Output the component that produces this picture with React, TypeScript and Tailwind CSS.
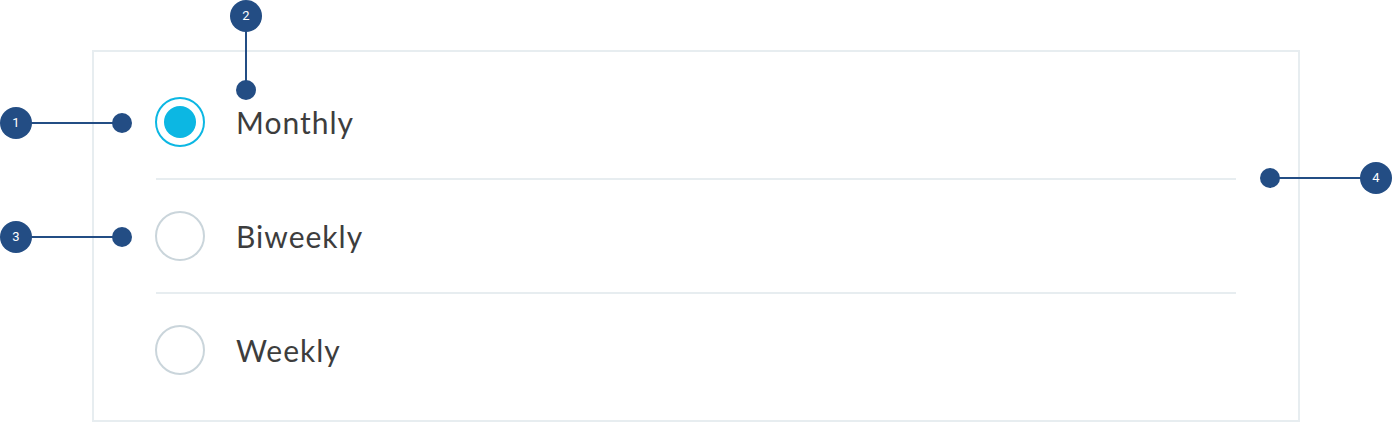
const options = ['Monthly', 'Biweekly', 'Weekly']

export default function App() {
  const selected = 'Monthly'

  return (
    <div className="relative w-[1392px] h-[422px] bg-white overflow-hidden pt-[50px] pl-[92px]" style={{ fontFamily: 'Lato, "Open Sans", sans-serif' }}>
      {/* Panel */}
      <div className="w-[1208px] h-[372px] border-2 border-[#e7edf0] bg-white flex flex-col py-[14px]">
        {options.map((opt, i) => (
          <div key={opt}>
            {i > 0 && <div className="mx-[62px] h-[2px] bg-[#e7edf0]" />}
            <RadioRow label={opt} checked={opt === selected} />
          </div>
        ))}
      </div>

      {/* Annotations */}
      <Callout n={1} cx={16} cy={123} dx={122} dy={123} />
      <Callout n={2} cx={246} cy={16} dx={246} dy={90} />
      <Callout n={3} cx={16} cy={237} dx={122} dy={237} />
      <Callout n={4} cx={1376} cy={178} dx={1270} dy={178} />
    </div>
  )
}

function RadioRow({ label, checked }: { label: string; checked: boolean }) {
  return (
    <div className="flex items-center h-[112px] pl-[61px]">
      {checked ? (
        <div className="w-[50px] h-[50px] rounded-full border-2 border-[#0cb7e3] flex items-center justify-center">
          <div className="w-[32px] h-[32px] rounded-full bg-[#0cb7e3]" />
        </div>
      ) : (
        <div className="w-[50px] h-[50px] rounded-full border-2 border-[#cad5db]" />
      )}
      <span className="ml-[31px] text-[30px] leading-none text-[#3d3d3d] tracking-[1px]">{label}</span>
    </div>
  )
}

// numbered marker with a leader line to a dot
function Callout({ n, cx, cy, dx, dy }: { n: number; cx: number; cy: number; dx: number; dy: number }) {
  const horizontal = cy === dy
  const line = horizontal
    ? { left: Math.min(cx, dx), top: cy - 1, width: Math.abs(cx - dx), height: 2 }
    : { left: cx - 1, top: Math.min(cy, dy), width: 2, height: Math.abs(cy - dy) }
  return (
    <>
      <div className="absolute bg-[#234d84]" style={line} />
      <div className="absolute w-[20px] h-[20px] rounded-full bg-[#234d84]" style={{ left: dx - 10, top: dy - 10 }} />
      <div
        className="absolute w-[32px] h-[32px] rounded-full bg-[#234d84] text-white text-[13px] flex items-center justify-center"
        style={{ left: cx - 16, top: cy - 16, fontFamily: 'Roboto, sans-serif' }}
      >
        {n}
      </div>
    </>
  )
}
